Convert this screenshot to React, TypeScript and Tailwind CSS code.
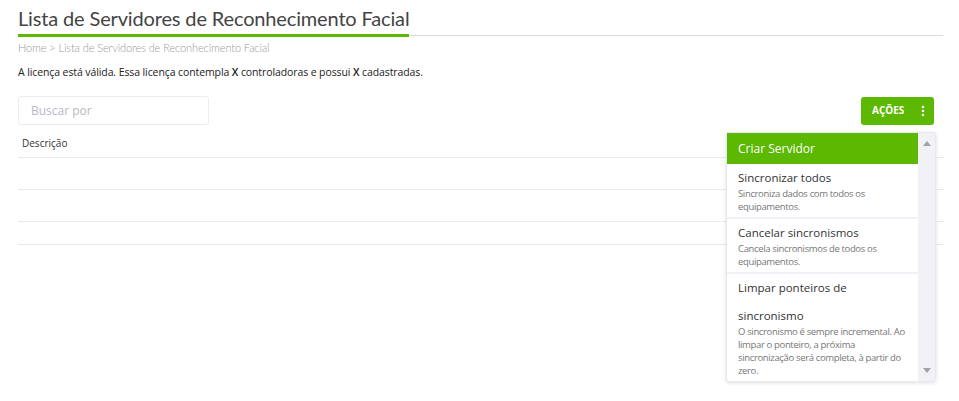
import { useState } from "react"

const items = [
  {
    title: "Sincronizar todos",
    desc: "Sincroniza dados com todos os equipamentos.",
  },
  {
    title: "Cancelar sincronismos",
    desc: "Cancela sincronismos de todos os equipamentos.",
  },
  {
    title: "Limpar ponteiros de sincronismo",
    desc: "O sincronismo é sempre incremental. Ao limpar o ponteiro, a próxima sincronização será completa, à partir do zero.",
  },
]

function ActionsMenu() {
  return (
    <div className="absolute right-[23px] top-[132px] z-10 flex h-[250px] w-[210px] rounded-[3px] border border-[#e6e8f2] bg-white shadow-[0_1px_4px_rgba(0,0,0,0.12)]">
      <div className="flex w-[191px] flex-col">
        <div className="flex h-[31px] shrink-0 items-center bg-[#5cb800] px-[11px] text-[12px] text-white">
          Criar Servidor
        </div>
        {items.map((it, i) => (
          <div
            key={it.title}
            className={`pb-[4px] pl-[11px] pr-[6px] ${i < items.length - 1 ? "border-b-2 border-[#f0f1f6]" : ""}`}
          >
            <div className="text-[11.5px] leading-[28px] text-[#333]">{it.title}</div>
            <p className="mt-[-5px] text-[9.5px] leading-[13px] tracking-[-0.35px] text-[#777]">{it.desc}</p>
          </div>
        ))}
      </div>
      <div className="relative flex-1 bg-[#f1f1f6]">
        <svg className="absolute left-[5px] top-[8px]" width="8" height="5" viewBox="0 0 8 5">
          <path d="M0 5 L4 0 L8 5 Z" fill="#a3a3a3" />
        </svg>
        <svg className="absolute bottom-[8px] left-[5px]" width="8" height="5" viewBox="0 0 8 5">
          <path d="M0 0 L4 5 L8 0 Z" fill="#a3a3a3" />
        </svg>
      </div>
    </div>
  )
}

export default function App() {
  const [query, setQuery] = useState("")

  return (
    <div className="relative h-[401px] w-[959px] bg-white font-['Open_Sans',sans-serif] text-[#333]">
      <div className="px-[18px] pr-[16px]">
        <div className="flex border-b border-[#dcdcdc]">
          <h1 className="border-b-[3px] border-[#5cb800] pb-[3px] pt-[5px] font-['Lato',sans-serif] text-[20px] leading-[26px] tracking-[-0.15px] text-[#444] -mb-[2px]">
            Lista de Servidores de Reconhecimento Facial
          </h1>
        </div>
        <div className="mt-[4px] font-['Lato',sans-serif] text-[11px] font-light tracking-[-0.1px] text-[#9a9a9a]">
          Home &gt; Lista de Servidores de Reconhecimento Facial
        </div>
        <p className="mt-[8px] text-[10.5px] tracking-[-0.1px] text-[#222]">
          A licença está válida. Essa licença contempla <b className="font-semibold">X</b> controladoras e possui{" "}
          <b className="font-semibold">X</b> cadastradas.
        </p>

        <div className="mt-[16px] flex items-center justify-between">
          <input
            value={query}
            onChange={(e) => setQuery(e.target.value)}
            placeholder="Buscar por"
            className="h-[29px] w-[191px] rounded-[3px] border border-[#ececec] px-[12px] text-[12px] text-[#333] outline-none placeholder:text-[#b9b9c3]"
          />
          <button className="mr-[9px] flex h-[28px] w-[73px] items-center justify-between rounded-[3px] bg-[#5cb800] pl-[11px] pr-[9px] text-[10px] font-bold text-white">
            AÇÕES
            <svg width="4" height="12" viewBox="0 0 4 12">
              <circle cx="2" cy="2" r="1.3" fill="white" />
              <circle cx="2" cy="6" r="1.3" fill="white" />
              <circle cx="2" cy="10" r="1.3" fill="white" />
            </svg>
          </button>
        </div>

        <table className="mt-[8px] w-full text-left">
          <thead>
            <tr className="border-b border-[#eaeaea]">
              <th className="h-[24px] px-[4px] pb-[4px] text-[10px] font-normal text-[#333]">Descrição</th>
            </tr>
          </thead>
          <tbody>
            <tr className="border-b border-[#eaeaea]"><td className="h-[32px]" /></tr>
            <tr className="border-b border-[#eaeaea]"><td className="h-[32px]" /></tr>
            <tr className="border-b border-[#eaeaea]"><td className="h-[23px]" /></tr>
          </tbody>
        </table>
      </div>
      <ActionsMenu />
    </div>
  )
}
